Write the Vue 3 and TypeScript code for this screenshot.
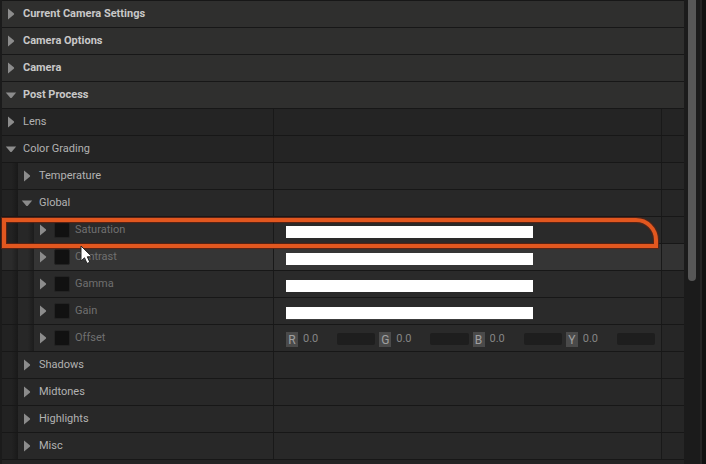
<script setup lang="ts">
import { reactive } from 'vue'

type Kind = 'section' | 'group' | 'color' | 'vector'

interface Row {
  id: string
  label: string
  level: 0 | 1 | 2
  kind: Kind
  open?: boolean
  hovered?: boolean
  marked?: boolean
  override?: boolean
}

const rows = reactive<Row[]>([
  { id: 'current', label: 'Current Camera Settings', level: 0, kind: 'section' },
  { id: 'options', label: 'Camera Options', level: 0, kind: 'section' },
  { id: 'camera', label: 'Camera', level: 0, kind: 'section' },
  { id: 'post', label: 'Post Process', level: 0, kind: 'section', open: true },
  { id: 'lens', label: 'Lens', level: 0, kind: 'group' },
  { id: 'grading', label: 'Color Grading', level: 0, kind: 'group', open: true },
  { id: 'temperature', label: 'Temperature', level: 1, kind: 'group' },
  { id: 'global', label: 'Global', level: 1, kind: 'group', open: true },
  { id: 'saturation', label: 'Saturation', level: 2, kind: 'color', override: false, marked: true },
  { id: 'contrast', label: 'Contrast', level: 2, kind: 'color', override: false, hovered: true },
  { id: 'gamma', label: 'Gamma', level: 2, kind: 'color', override: false },
  { id: 'gain', label: 'Gain', level: 2, kind: 'color', override: false },
  { id: 'offset', label: 'Offset', level: 2, kind: 'vector', override: false },
  { id: 'shadows', label: 'Shadows', level: 1, kind: 'group' },
  { id: 'midtones', label: 'Midtones', level: 1, kind: 'group' },
  { id: 'highlights', label: 'Highlights', level: 1, kind: 'group' },
  { id: 'misc', label: 'Misc', level: 1, kind: 'group' },
])

const channels = reactive([
  { name: 'R', value: '0.0' },
  { name: 'G', value: '0.0' },
  { name: 'B', value: '0.0' },
  { name: 'Y', value: '0.0' },
])
</script>

<template>
  <main class="window">
    <section class="panel">
      <div
        v-for="row in rows"
        :key="row.id"
        class="row"
        :class="['level-' + row.level, { section: row.kind === 'section', hovered: row.hovered }]"
      >
        <div class="name">
          <span v-for="n in row.level" :key="n" class="guide"></span>
          <button class="toggle" type="button" :aria-label="row.label" :aria-expanded="!!row.open">
            <svg v-if="row.open" width="12" height="12" viewBox="0 0 12 12">
              <path d="M0.8 3.4H11.2L6.8 8.7Q6 9.5 5.2 8.7Z" />
            </svg>
            <svg v-else width="12" height="12" viewBox="0 0 12 12">
              <path d="M3 0.6L8.8 5.3Q9.6 6 8.8 6.7L3 11.4Z" />
            </svg>
          </button>
          <label v-if="row.level === 2" class="override">
            <input v-model="row.override" type="checkbox" />
            <span>{{ row.label }}</span>
          </label>
          <span v-else class="text">{{ row.label }}</span>
        </div>
        <template v-if="row.kind !== 'section'">
          <div class="value">
            <div v-if="row.kind === 'color'" class="bar" :class="{ worn: row.id === 'gain' }"></div>
            <template v-if="row.kind === 'vector'">
              <label v-for="c in channels" :key="c.name" class="channel">
                <span class="badge">{{ c.name }}</span>
                <input v-model="c.value" type="text" />
                <span class="well"></span>
              </label>
            </template>
          </div>
          <div class="reset"></div>
        </template>
        <div v-if="row.marked" class="marker"></div>
        <svg v-if="row.hovered" class="pointer" width="13" height="20" viewBox="0 0 13 20">
          <path d="M1 1V16L4.5 12.8L7 18.5L9.8 17.2L7.3 11.8H12Z" />
        </svg>
      </div>
      <div class="row tail"></div>
    </section>
    <div class="scroll"><div class="thumb"></div></div>
    <div class="edge"></div>
  </main>
</template>

<style>
body {
  background: #1b1b1b;
}
</style>

<style scoped>
.window {
  display: flex;
  height: 100vh;
  overflow: hidden;
  box-sizing: border-box;
  padding-left: 2px;
  background: #1b1b1b;
  color: #b2b2b2;
  font: 11px/16px Roboto, "Liberation Sans", sans-serif;
}
.panel {
  flex: 1;
  min-width: 0;
  background: #242424;
}
.row {
  position: relative;
  display: grid;
  grid-template-columns: 271fr 388fr 23px;
  height: 27px;
  box-sizing: border-box;
  border-top: 1px solid #171717;
  background: #242424;
}
.section {
  grid-template-columns: 1fr;
  background: #2f2f2e;
  color: #c8c8c8;
  font-weight: 700;
}
.level-1 {
  background: #282828;
}
.level-2 {
  background: #2a2a2a;
  color: #707070;
}
.hovered {
  background: #353535;
}
.name {
  display: flex;
  align-items: center;
  min-width: 0;
  white-space: nowrap;
}
.guide {
  width: 16px;
  align-self: stretch;
  background: linear-gradient(90deg, #222222 60%, #191919);
}
.guide + .guide {
  background: linear-gradient(90deg, #272727 60%, #1c1c1c);
}
.hovered .guide {
  background: linear-gradient(90deg, #2b2b2b 60%, #1e1e1e);
}
.toggle {
  display: flex;
  width: 12px;
  height: 12px;
  margin: 0 3px;
  padding: 0;
  border: 0;
  background: none;
}
.toggle svg {
  display: block;
  fill: #8c8c8c;
}
.text {
  padding-left: 3px;
}
.override {
  display: flex;
  align-items: center;
  gap: 5px;
  padding-left: 2px;
}
.override input {
  appearance: none;
  width: 16px;
  height: 16px;
  margin: 0;
  border: 1px solid #232323;
  border-radius: 2px;
  background: #111111;
}
.value {
  display: flex;
  align-items: center;
  gap: 4px;
  padding: 2px 6px 0 12px;
  border-left: 1px solid #191919;
}
.reset {
  border-left: 1px solid #191919;
  background: #262626;
}
.level-0 .reset {
  background: none;
}
.hovered .reset {
  background: #333333;
}
.bar {
  width: 247px;
  height: 12px;
  margin-top: 1px;
  background: #ffffff;
}
.worn {
  box-shadow: 0 1px #3c3c3c;
}
.channel {
  display: flex;
  flex: 1;
  align-items: center;
  min-width: 0;
  height: 14px;
}
.badge {
  width: 12px;
  height: 15px;
  background: #4a4a4a;
  color: #a0a0a0;
  font-size: 12px;
  line-height: 16px;
  text-align: center;
}
.channel input {
  width: 34px;
  box-sizing: border-box;
  padding: 0 0 0 5px;
  border: 0;
  background: none;
  color: #858585;
  font: inherit;
}
.well {
  flex: 1;
  height: 12px;
  margin-left: 5px;
  border-radius: 2px;
  background: #1e1e1e;
}
.marker {
  position: absolute;
  z-index: 1;
  top: 1px;
  left: 0;
  right: 26px;
  height: 30px;
  box-sizing: border-box;
  border: 4px solid #e2571f;
  border-top-right-radius: 22px;
  box-shadow: 0 0 1px 1px #5c2414, inset 0 0 1px 1px #5c2414;
  pointer-events: none;
}
.pointer {
  position: absolute;
  z-index: 2;
  top: 1px;
  left: 78px;
  fill: #ffffff;
  stroke: #222222;
  stroke-width: 1px;
}
.scroll {
  width: 16px;
  box-sizing: border-box;
  padding: 0 4px;
  background: #1b1b1b;
}
.thumb {
  height: 60.5%;
  border-radius: 0 0 4px 4px;
  background: #575757;
}
.edge {
  width: 6px;
  box-sizing: border-box;
  border-left: 2px solid #242424;
  background: #111111;
}
</style>
